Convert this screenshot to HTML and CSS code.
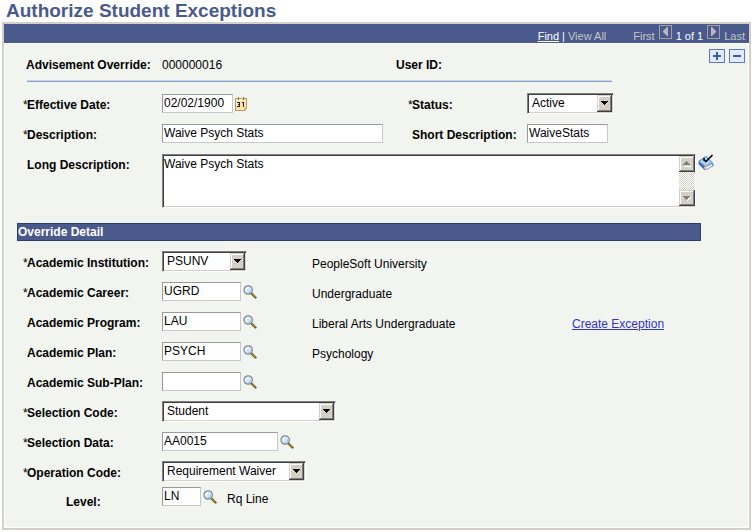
FILE: index.html
```html
<!DOCTYPE html>
<html lang="en">
<head>
    <meta charset="UTF-8">
    <meta name="viewport" content="width=device-width, initial-scale=1.0">
    <title>Authorize Student Exceptions</title>
    <link rel="stylesheet" href="styles.css">
</head>
<body>
    <!-- shared icons -->
    <svg class="sprite" width="0" height="0">
        <symbol id="lookup" viewBox="0 0 14 14">
            <path d="M8.5 8.5L12.5 12.5" stroke="#6b6420" stroke-width="2.4" stroke-linecap="round"/>
            <path d="M9 8.5L12.5 12" stroke="#b5ab4c" stroke-width="1"/>
            <circle cx="5.2" cy="5" r="4.2" fill="#cfe6ff" stroke="#858585" stroke-width="1.2"/>
            <path d="M3 5.5a2.5 2.5 0 0 1 2.5-3" fill="none" stroke="#fff" stroke-width="1.6"/>
            <path d="M5 7.5a2.5 2.5 0 0 0 2.6-2.5" fill="none" stroke="#a6cdf8" stroke-width="1.2"/>
        </symbol>
        <symbol id="down" viewBox="0 0 15 17">
            <path d="M0 0h15v17H0z" fill="#404040"/>
            <path d="M0 0h14v16H0z" fill="#d4d0c8"/>
            <path d="M1 15V1h12v1H2v13z" fill="#fff"/>
            <path d="M1 15h12V1h1v15H1z" fill="#808080"/>
            <path d="M4 6h7v1h-1v1H9v1H8v1H7V9H6V8H5V7H4z" fill="#000"/>
        </symbol>
    </svg>

    <h1>Authorize Student Exceptions</h1>
    <form class="panel" action="#" method="post">
        <div class="bar">
            <nav class="find"><a href="#">Find</a><span>|</span><span class="off">View All</span></nav>
            <nav class="pager">
                <span class="off">First</span>
                <button type="button" aria-label="Previous"><svg width="11" height="12" viewBox="0 0 11 12"><path d="M8 1v9H7L3 6V5l4-4z" fill="#b9b9b9"/></svg></button>
                <span>1 of 1</span>
                <button type="button" aria-label="Next"><svg width="11" height="12" viewBox="0 0 11 12"><path d="M3 1v9h1l4-4V5L4 1z" fill="#b9b9b9"/></svg></button>
                <span class="off">Last</span>
            </nav>
        </div>

        <div class="head">
            <span class="label">Advisement Override:</span>
            <span class="value">000000016</span>
            <span class="label">User ID:</span>
            <div class="addremove">
                <button type="button" aria-label="Add"><svg width="14" height="12" viewBox="0 0 14 12"><path d="M3 5h3V2h2v3h3v2H8v3H6V7H3z" fill="#4257a5"/></svg></button>
                <button type="button" aria-label="Remove"><svg width="14" height="12" viewBox="0 0 14 12"><path d="M3 5h8v2H3z" fill="#4257a5"/></svg></button>
            </div>
        </div>
        <hr>

        <div class="row top">
            <label for="effdt"><i>*</i>Effective Date:</label>
            <div class="control">
                <input type="text" id="effdt" class="date" value="02/02/1900">
                <button type="button" class="icon" aria-label="Choose date">
                    <svg width="12" height="14" viewBox="0 0 12 14">
                        <path d="M0 1h12v10l-2 3H0z" fill="#c09a5c"/>
                        <path d="M1 2h10v8l-2 3H1z" fill="#fbe3ae"/>
                        <path d="M1 2h6v2H1zM1 4h2v5H1z" fill="#fff6dc"/>
                        <path d="M3 0h1v3H3zM8 0h1v3H8z" fill="#8c7a55"/>
                        <path d="M2 5h3v5H2V9h2V8H3V7h1V6H2zM7 5h2v5H8V6H7z" fill="#222"/>
                        <path d="M9 13v-2h2z" fill="#d9b36a"/>
                    </svg>
                </button>
            </div>
            <label for="status"><i>*</i>Status:</label>
            <div class="control"><span class="select status"><select id="status"><option>Active</option></select><svg><use href="#down"/></svg></span></div>
        </div>
        <div class="row top">
            <label for="descr"><i>*</i>Description:</label>
            <div class="control"><input type="text" id="descr" class="descr" value="Waive Psych Stats"></div>
            <label for="short"><i></i>Short Description:</label>
            <div class="control"><input type="text" id="short" class="short" value="WaiveStats"></div>
        </div>
        <div class="row long">
            <label for="long"><i></i>Long Description:</label>
            <div class="memo">
                <textarea id="long">Waive Psych Stats</textarea>
                <span class="scroll">
                    <svg width="16" height="16" viewBox="0 0 16 16"><path d="M0 0h16v16H0z" fill="#404040"/><path d="M0 0h15v15H0z" fill="#d4d0c8"/><path d="M1 14V1h13v1H2v12z" fill="#fff"/><path d="M1 14h13V1h1v14H1z" fill="#808080"/><path d="M5 10h7v1H5z" fill="#fff"/><path d="M4 9h7V8h-1V7H9V6H8V5H7v1H6v1H5v1H4z" fill="#808080"/></svg>
                    <svg width="16" height="16" viewBox="0 0 16 16"><path d="M0 0h16v16H0z" fill="#404040"/><path d="M0 0h15v15H0z" fill="#d4d0c8"/><path d="M1 14V1h13v1H2v12z" fill="#fff"/><path d="M1 14h13V1h1v14H1z" fill="#808080"/><path d="M12 7v1h-1v1h-1v1H9v1H8v-1l3-3z" fill="#fff"/><path d="M4 6h7v1h-1v1H9v1H8v1H7V9H6V8H5V7H4z" fill="#808080"/></svg>
                </span>
            </div>
            <button type="button" class="icon" aria-label="Spell check">
                <svg width="16" height="17" viewBox="0 0 16 17">
                    <path d="M0.5 7L8 2l7.500 8v2L8 16H6.500L0.500 10z" fill="#4669ad"/>
                    <path d="M1 7.500L7.500 2.500l7 6L7.500 12.500z" fill="#a5d4f8" stroke="#7590bd"/>
                    <path d="M7.500 13l7-3.500v2.500l-6.500 3.500z" fill="#fff" stroke="#8b96a8" stroke-width=".5"/>
                    <path d="M6 12.500h2v3H6.500z" fill="#e6bac0"/>
                    <path d="M6 4v2l2 1.500L14.500 1" fill="none" stroke="#000" stroke-width="1.600"/>
                </svg>
            </button>
        </div>

        <h2>Override Detail</h2>

        <div class="row">
            <label for="inst"><i>*</i>Academic Institution:</label>
            <div class="control"><span class="select inst"><select id="inst"><option>PSUNV</option></select><svg><use href="#down"/></svg></span></div>
            <span class="value">PeopleSoft University</span>
        </div>
        <div class="row">
            <label for="career"><i>*</i>Academic Career:</label>
            <div class="control"><input type="text" id="career" class="code" value="UGRD"><button type="button" class="icon" aria-label="Look up Academic Career"><svg width="14" height="14"><use href="#lookup"/></svg></button></div>
            <span class="value">Undergraduate</span>
        </div>
        <div class="row">
            <label for="program"><i></i>Academic Program:</label>
            <div class="control"><input type="text" id="program" class="code" value="LAU"><button type="button" class="icon" aria-label="Look up Academic Program"><svg width="14" height="14"><use href="#lookup"/></svg></button></div>
            <span class="value">Liberal Arts Undergraduate</span>
            <a class="value" href="#">Create Exception</a>
        </div>
        <div class="row">
            <label for="plan"><i></i>Academic Plan:</label>
            <div class="control"><input type="text" id="plan" class="code" value="PSYCH"><button type="button" class="icon" aria-label="Look up Academic Plan"><svg width="14" height="14"><use href="#lookup"/></svg></button></div>
            <span class="value">Psychology</span>
        </div>
        <div class="row">
            <label for="subplan"><i></i>Academic Sub-Plan:</label>
            <div class="control"><input type="text" id="subplan" class="code" value=""><button type="button" class="icon" aria-label="Look up Academic Sub-Plan"><svg width="14" height="14"><use href="#lookup"/></svg></button></div>
        </div>
        <div class="row wide">
            <label for="selcode"><i>*</i>Selection Code:</label>
            <div class="control"><span class="select selcode"><select id="selcode"><option>Student</option></select><svg><use href="#down"/></svg></span></div>
        </div>
        <div class="row wide">
            <label for="seldata"><i>*</i>Selection Data:</label>
            <div class="control"><input type="text" id="seldata" class="seldata" value="AA0015"><button type="button" class="icon" aria-label="Look up Selection Data"><svg width="14" height="14"><use href="#lookup"/></svg></button></div>
        </div>
        <div class="row wide">
            <label for="opcode"><i>*</i>Operation Code:</label>
            <div class="control"><span class="select opcode"><select id="opcode"><option>Requirement Waiver</option></select><svg><use href="#down"/></svg></span></div>
        </div>
        <div class="row wide level">
            <label for="level">Level:</label>
            <div class="control"><input type="text" id="level" class="lvl" value="LN"><button type="button" class="icon" aria-label="Look up Level"><svg width="14" height="14"><use href="#lookup"/></svg></button><span class="value">Rq Line</span></div>
        </div>
    </form>
</body>
</html>
```
FILE: styles.css
```css
body {
	margin: 0;
	background: #fff;
	color: #000;
	font: 12px/16px "Liberation Sans", Arial, sans-serif;
}
.sprite {
	position: absolute;
}
svg {
	display: block;
}
h1 {
	margin: 0 6px;
	font-size: 19px;
	line-height: 22px;
	color: #4a5a8c;
}
.panel {
	margin: 0 4px 0 2px;
	padding-bottom: 15px;
	border: 2px solid #d4d0c8;
	background: #f1f4ef;
	box-shadow: inset -1px -1px #fff, inset 1px 0 #fff;
}

/* blue navigation bar */
.bar {
	display: flex;
	justify-content: flex-end;
	align-items: center;
	gap: 27px;
	height: 19px;
	padding-right: 4px;
	border-bottom: 1px solid #fff;
	background: #4a5a8c;
	color: #fff;
	font-size: 11px;
	line-height: 14px;
}
.find, .pager {
	display: flex;
	align-items: center;
}
.find {
	gap: 3px;
}
.pager {
	gap: 4px;
}
.find a, .bar span {
	padding-top: 5px;
	color: #fff;
}
.bar .off {
	color: #c6c6c6;
}
.bar button {
	padding: 0;
	margin-bottom: 4px;
	border: 1px solid #a0a0a0;
	background: none;
}

/* key fields */
.head {
	display: grid;
	grid-template-columns: 136px 234px 1fr auto;
	padding: 5px 4px 0 22px;
	height: 31px;
}
.head .label, .head .value {
	padding-top: 8px;
}
.label, label {
	font-weight: bold;
}
.addremove {
	display: flex;
	align-items: flex-start;
	gap: 4px;
}
.addremove button {
	padding: 0;
	border: 1px solid #6078c0;
	background: #dfebff;
}
hr {
	height: 1px;
	margin: 0 137px 8px 23px;
	border: 0;
	border-top: 1px solid #c9d6ea;
	background: #8ea0c8;
}

/* form rows */
.row {
	display: grid;
	grid-template-columns: 139px 150px 260px 1fr;
	align-items: center;
	height: 27px;
	padding: 0 4px 3px 19px;
}
.row.top {
	grid-template-columns: 139px 246px 119px 1fr;
}
.row.wide {
	grid-template-columns: 139px 1fr;
}
.row label {
	padding-top: 3px;
}
label i {
	display: inline-block;
	width: 4px;
	font-style: normal;
	font-weight: normal;
}
.row .value {
	padding-top: 5px;
}
.control {
	display: flex;
	align-items: center;
}
.row.long {
	grid-template-columns: 139px minmax(0, 1fr) auto;
	align-items: start;
	height: auto;
	padding: 4px 35px 0 19px;
}
input, select, textarea {
	box-sizing: border-box;
	margin: 0;
	border-radius: 0;
	background: #fff;
	color: #000;
	font: inherit;
}
input {
	height: 19px;
	padding: 0 1px 1px;
	border: 1px solid #999;
	border-right-color: #c8c8c8;
	border-bottom-color: #c8c8c8;
}
.icon {
	margin: 0 0 0 2px;
	padding: 0;
	border: 0;
	background: none;
}
a.value {
	color: #33c;
}
.date {
	width: 71px;
}
.descr {
	width: 221px;
}
.short {
	width: 81px;
}
.code {
	width: 79px;
}
.seldata {
	width: 116px;
}
.lvl {
	width: 39px;
}

/* drop-downs with the sunken edge */
.select {
	position: relative;
}
.select select {
	display: block;
	appearance: none;
	width: 100%;
	height: 21px;
	padding: 0 18px 1px 4px;
	border: 1px solid #808080;
	border-right-color: #fff;
	border-bottom-color: #fff;
	box-shadow: inset 1px 1px #404040, inset -1px -1px #d4d0c8;
}
.select svg {
	position: absolute;
	top: 2px;
	right: 2px;
	width: 15px;
	height: 17px;
	pointer-events: none;
}
.status {
	width: 87px;
}
.inst {
	width: 85px;
}
.selcode {
	width: 174px;
}
.opcode {
	width: 144px;
}

.memo {
	position: relative;
}
textarea {
	display: block;
	width: 100%;
	height: 54px;
	padding: 1px 18px 1px 1px;
	border: 1px solid #808080;
	border-right-color: #fff;
	border-bottom-color: #fff;
	box-shadow: inset 1px 1px #404040, inset -1px -1px #d4d0c8;
	resize: none;
	overflow: hidden;
}
.scroll {
	position: absolute;
	top: 2px;
	right: 1px;
	bottom: 2px;
	display: flex;
	flex-direction: column;
	justify-content: space-between;
	background: repeating-conic-gradient(#d4d0c8 0 25%, #fff 0 50%) 0 0 / 2px 2px;
}

h2 {
	margin: 15px 48px 7px 13px;
	border: 1px solid #2c3f77;
	background: #4a5a8c;
	color: #fff;
	font-size: 12px;
	line-height: 16px;
}
.level {
	margin-top: -5px;
}
.level label {
	padding: 11px 0 0 43px;
}
.level .value {
	margin-left: 10px;
}
```
